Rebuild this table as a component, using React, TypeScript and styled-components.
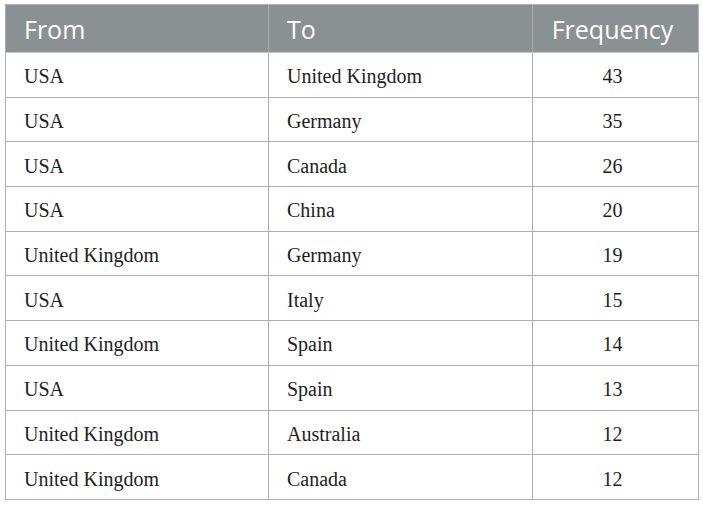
import React from "react";
import styled, { createGlobalStyle } from "styled-components";

const Global = createGlobalStyle`
  html, body { margin: 0; padding: 0; background: #ffffff; }
`;

const Page = styled.div`
  padding: 4px 5px 0 5px;
  width: 693px;
`;

const Table = styled.table`
  width: 693px;
  border-collapse: collapse;
  table-layout: fixed;
  border: 1px solid #adb2b1;
`;

const HeadCell = styled.th<{ $align?: string }>`
  background: #8b9192;
  color: #ffffff;
  font-family: "Open Sans", "Noto Sans", sans-serif;
  font-weight: 400;
  font-size: 25px;
  height: 48px;
  padding: 0 0 0 18px;
  text-align: ${(p) => p.$align || "left"};
  border-left: 1px solid #a9aeae;
  border-bottom: 1px solid #c4c8c8;
  box-sizing: border-box;
  ${(p) => (p.$align === "center" ? "padding: 0 6px 0 0;" : "")}
`;

const Cell = styled.td<{ $align?: string }>`
  font-family: "Liberation Serif", "Times New Roman", serif;
  font-size: 20px;
  color: #1e1e1e;
  height: 44.7px;
  padding: 4px 0 0 18px;
  box-sizing: border-box;
  text-align: ${(p) => p.$align || "left"};
  border: 1px solid #adb2b1;
  ${(p) => (p.$align === "center" ? "padding: 4px 6px 0 0;" : "")}
`;

const rows: [string, string, number][] = [
  ["USA", "United Kingdom", 43],
  ["USA", "Germany", 35],
  ["USA", "Canada", 26],
  ["USA", "China", 20],
  ["United Kingdom", "Germany", 19],
  ["USA", "Italy", 15],
  ["United Kingdom", "Spain", 14],
  ["USA", "Spain", 13],
  ["United Kingdom", "Australia", 12],
  ["United Kingdom", "Canada", 12],
];

export default function App() {
  return (
    <>
      <Global />
      <Page>
        <Table>
          <colgroup>
            <col style={{ width: 263 }} />
            <col style={{ width: 264 }} />
            <col style={{ width: 166 }} />
          </colgroup>
          <thead>
            <tr>
              <HeadCell>From</HeadCell>
              <HeadCell>To</HeadCell>
              <HeadCell $align="center">Frequency</HeadCell>
            </tr>
          </thead>
          <tbody>
            {rows.map((r, i) => (
              <tr key={i}>
                <Cell>{r[0]}</Cell>
                <Cell>{r[1]}</Cell>
                <Cell $align="center">{r[2]}</Cell>
              </tr>
            ))}
          </tbody>
        </Table>
      </Page>
    </>
  );
}
